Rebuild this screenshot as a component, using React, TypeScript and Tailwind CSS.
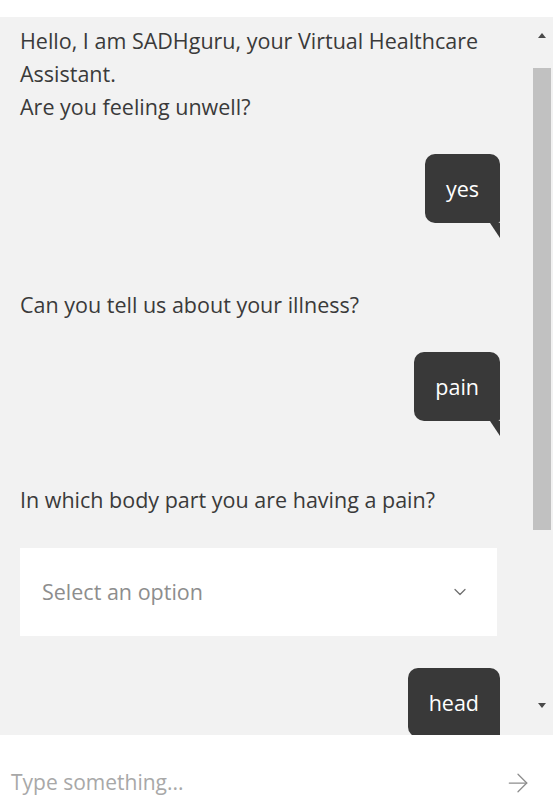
import { ArrowRight, ChevronDown } from 'lucide-react'

function Bubble({ text, clip }: { text: string; clip?: boolean }) {
  return (
    <div className="flex justify-end">
      <div className="relative">
        <div className="rounded-[10px] rounded-br-[2px] bg-[#393939] px-[21px] py-[18px] text-[21.5px] leading-[33px] text-white">
          {text}
        </div>
        {!clip && (
          <div className="absolute right-0 top-full h-0 w-0 border-l-[10px] border-t-[15px] border-l-transparent border-t-[#393939]" />
        )}
      </div>
    </div>
  )
}

function Question({ children }: { children: React.ReactNode }) {
  return <p className="text-[21.5px] leading-[33px] text-[#3a3a3a]">{children}</p>
}

function ScrollRail() {
  return (
    <div className="flex w-[23px] flex-col items-center">
      <div className="mt-[16px] h-0 w-0 border-x-[4px] border-b-[5px] border-x-transparent border-b-[#4a4a4a]" />
      <div className="mt-[30px] h-[462px] w-[18px] bg-[#c1c1c1]" />
      <div className="mt-[173px] h-0 w-0 border-x-[4px] border-t-[5px] border-x-transparent border-t-[#4a4a4a]" />
    </div>
  )
}

export default function App() {
  return (
    <div
      className="flex h-[798px] w-[553px] flex-col bg-white"
      style={{ fontFamily: '"Open Sans", "Noto Sans", sans-serif' }}
    >
      <div className="h-[17px] bg-white" />
      <div className="flex h-[718px] overflow-hidden bg-[#f2f2f2]">
        <div className="flex-1 overflow-hidden pl-[20px] pr-[30px] pt-[7px]">
          <Question>
            Hello, I am SADHguru, your Virtual Healthcare
            <br />
            Assistant.
            <br />
            Are you feeling unwell?
          </Question>
          <div className="mt-[31px]">
            <Bubble text="yes" />
          </div>
          <div className="mt-[65px]">
            <Question>Can you tell us about your illness?</Question>
          </div>
          <div className="mt-[31px]">
            <Bubble text="pain" />
          </div>
          <div className="mt-[62px]">
            <Question>In which body part you are having a pain?</Question>
          </div>
          <div className="mt-[32px] mr-[3px] flex h-[88px] items-center justify-between bg-white pl-[22px] pr-[27px]">
            <span className="text-[21.5px] text-[#8d8d8d]">Select an option</span>
            <ChevronDown className="h-[20px] w-[20px] text-[#6f6f6f]" strokeWidth={1.5} />
          </div>
          <div className="mt-[32px]">
            <Bubble text="head" clip />
          </div>
        </div>
        <ScrollRail />
      </div>
      <div className="flex flex-1 items-start justify-between pl-[11px] pr-[20px] pt-[35px]">
        <span className="text-[21px] leading-[24px] text-[#a8a8a8]">Type something...</span>
        <ArrowRight className="h-[30px] w-[30px] -mt-[2px] text-[#8d8d8d]" strokeWidth={1} />
      </div>
    </div>
  )
}
